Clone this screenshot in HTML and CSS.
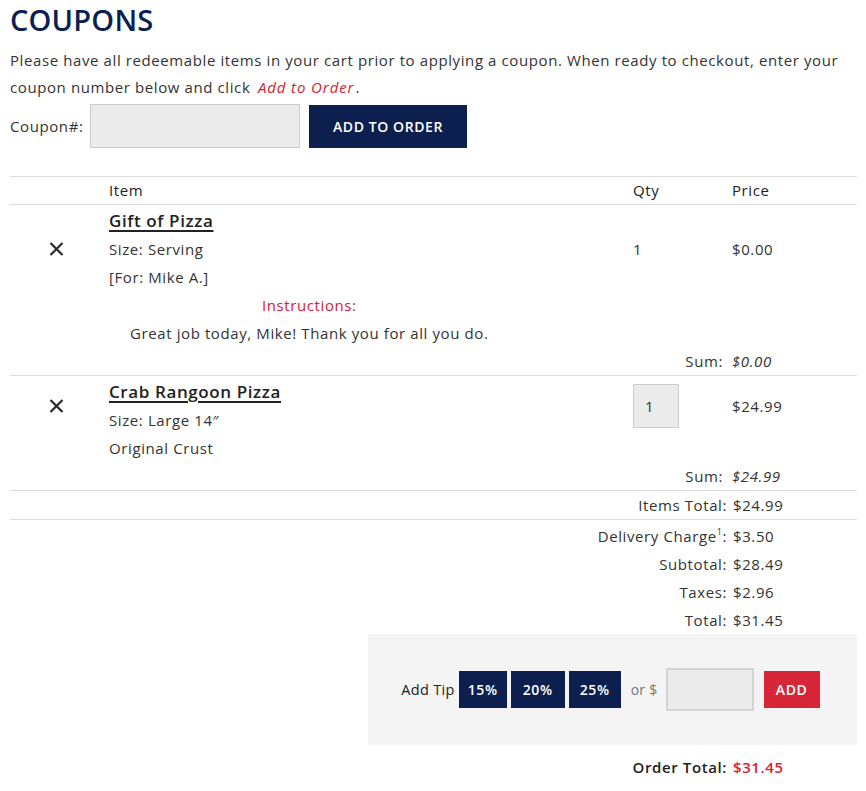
FILE: index.html
```html
<!DOCTYPE html>
<html lang="en">
<head>
<meta charset="utf-8">
<title>Coupons</title>
<link rel="stylesheet" href="styles.css">
</head>
<body>
<div class="page">
  <h1 class="title">COUPONS</h1>
  <p class="intro">Please have all redeemable items in your cart prior to applying a coupon. When ready to checkout, enter your coupon number below and click <em class="red link-em">Add to Order<span class="stop">.</span></em></p>
  <div class="coupon-row">
    <label class="coupon-label" for="coupon">Coupon#:</label>
    <input class="coupon-input" id="coupon" type="text">
    <button class="btn-navy add-order">ADD TO ORDER</button>
  </div>

  <div class="cart">
    <div class="cart-head">
      <div></div>
      <div>Item</div>
      <div>Qty</div>
      <div>Price</div>
    </div>

    <div class="cart-item">
      <div class="remove r1">
        <svg width="15" height="14" viewBox="0 0 15 14"><path d="M1.5 1 L13.5 13 M13.5 1 L1.5 13" stroke="#2b2b2b" stroke-width="2.2" fill="none"/></svg>
      </div>
      <div class="info r1">
        <a class="item-name" href="#">Gift of Pizza</a>
        <div class="line">Size: Serving</div>
        <div class="line">[For: Mike A.]</div>
      </div>
      <div class="qty r1">1</div>
      <div class="price r1">$0.00</div>
      <div class="extra">
        <div class="instr-label">Instructions:</div>
        <div class="instr-text">Great job today, Mike! Thank you for all you do.</div>
      </div>
      <div class="sum-label">Sum:</div>
      <div class="sum-value">$0.00</div>
    </div>

    <div class="cart-item">
      <div class="remove r1">
        <svg width="15" height="14" viewBox="0 0 15 14"><path d="M1.5 1 L13.5 13 M13.5 1 L1.5 13" stroke="#2b2b2b" stroke-width="2.2" fill="none"/></svg>
      </div>
      <div class="info r1">
        <a class="item-name" href="#">Crab Rangoon Pizza</a>
        <div class="line">Size: Large 14″</div>
      </div>
      <div class="qty r1"><input class="qty-input" type="text" value="1"></div>
      <div class="price r1">$24.99</div>
      <div class="extra">
        <div class="line">Original Crust</div>
      </div>
      <div class="sum-label">Sum:</div>
      <div class="sum-value">$24.99</div>
    </div>

    <div class="totals items-total">
      <div class="t-label">Items Total:</div>
      <div class="t-value">$24.99</div>
    </div>
    <div class="totals charges">
      <div class="t-label">Delivery Charge<sup>1</sup>:</div>
      <div class="t-value">$3.50</div>
      <div class="t-label">Subtotal:</div>
      <div class="t-value">$28.49</div>
      <div class="t-label">Taxes:</div>
      <div class="t-value">$2.96</div>
      <div class="t-label">Total:</div>
      <div class="t-value">$31.45</div>
    </div>
  </div>

  <div class="tip-wrap">
    <div class="tip-box">
      <span class="tip-label">Add Tip</span>
      <button class="btn-navy tip-btn">15%</button>
      <button class="btn-navy tip-btn">20%</button>
      <button class="btn-navy tip-btn">25%</button>
      <span class="tip-or">or $</span>
      <input class="tip-input" type="text">
      <button class="btn-red">ADD</button>
    </div>
  </div>

  <div class="totals order-total">
    <div class="t-label strong">Order Total:</div>
    <div class="t-value strong red">$31.45</div>
  </div>
</div>
</body>
</html>
```

FILE: styles.css
```css
* { box-sizing: border-box; }
html, body { margin: 0; padding: 0; background: #fff; }
body {
  font-family: "Open Sans", "Liberation Sans", sans-serif;
  font-size: 15px;
  color: #333;
  letter-spacing: 0.6px;
}
.page { padding: 0 9px 0 10px; }
.title {
  margin: 0;
  height: 40px;
  line-height: 40px;
  font-size: 29px;
  font-weight: 600;
  color: #0c1f4f;
  letter-spacing: 0.2px;
}
.intro {
  margin: 7px 0 0;
  line-height: 27px;
  font-size: 15px;
}
.red { color: #d9202f; }
.link-em { letter-spacing: 0.9px; margin-left: 3px; }
.stop { font-style: normal; color: #333; letter-spacing: 0; margin-left: 1px; }
.coupon-row {
  margin-top: 3px;
  display: flex;
  align-items: center;
  height: 44px;
}
.coupon-label { width: 80px; }
.coupon-input {
  width: 210px;
  height: 44px;
  background: #ebebeb;
  border: 1px solid #ccc;
  margin: 0;
}
.btn-navy {
  background: #0c1f4f;
  color: #fff;
  border: 0;
  font-family: inherit;
  font-weight: 600;
  cursor: pointer;
  letter-spacing: 0.6px;
}
.add-order {
  margin-left: 9px;
  width: 158px;
  height: 43px;
  font-size: 14px;
  letter-spacing: 0.6px;
}
.cart { margin-top: 28px; }
.cart-head, .cart-item {
  display: grid;
  grid-template-columns: 99px 1fr 99px 125px;
}
.cart-head {
  border-top: 1px solid #ddd;
  border-bottom: 1px solid #ddd;
  height: 29px;
  line-height: 27px;
  font-weight: 500;
  color: #222;
}
.cart-item {
  border-bottom: 1px solid #ddd;
  padding-top: 2px;
  line-height: 28px;
}
.r1 { grid-row: 1; }
.remove { grid-column: 1; align-self: center; display: flex; justify-content: center; padding-right: 6px; }
.remove svg { display: block; }
.info { grid-column: 2; }
.qty { grid-column: 3; align-self: center; }
.price { grid-column: 4; align-self: center; }
.item-name {
  color: #222;
  font-weight: 600;
  font-size: 17px;
  text-decoration: underline;
  text-underline-offset: 3px;
  text-decoration-thickness: 1.5px;
}
.extra { grid-column: 2; grid-row: 2; }
.instr-label { color: #d9202f; padding-left: 153px; font-weight: 500; }
.instr-text { padding-left: 21px; }
.sum-label { grid-column: 3; grid-row: 3; text-align: right; padding-right: 9px; }
.sum-value { grid-column: 4; grid-row: 3; font-style: italic; }
.qty-input {
  width: 46px;
  height: 44px;
  background: #ebebeb;
  border: 1px solid #ccc;
  font-family: inherit;
  font-size: 15px;
  color: #333;
  padding: 0 0 0 11px;
  display: block;
  margin-top: -1px;
}
.totals {
  display: grid;
  grid-template-columns: 1fr 125px;
  line-height: 28px;
}
.t-label { text-align: right; padding-right: 5px; }
.t-value { padding-left: 1px; }
.items-total { border-bottom: 1px solid #ddd; }
.charges { padding-top: 2px; }
sup { font-size: 9px; line-height: 0; vertical-align: 7px; color: #333; }
.tip-wrap { display: flex; justify-content: flex-end; }
.tip-box {
  width: 489px;
  height: 111px;
  background: #f4f4f4;
  display: flex;
  align-items: center;
  justify-content: center;
  padding-right: 4px;
}
.tip-label { font-weight: 500; color: #222; margin-right: 4px; font-size: 14.5px; letter-spacing: 0.3px; }
.tip-btn {
  height: 37px;
  font-size: 14px;
  padding: 0;
  margin-right: 4px;
}
.tip-btn:nth-of-type(1) { width: 48px; }
.tip-btn:nth-of-type(2) { width: 54px; }
.tip-btn:nth-of-type(3) { width: 52px; }
.tip-or { color: #777; font-size: 14px; margin-left: 6px; margin-right: 8px; letter-spacing: 0.3px; }
.tip-input {
  width: 88px;
  height: 43px;
  background: #ebebeb;
  border: 2px solid #d4d4d4;
  margin: 0 10px 0 0;
}
.btn-red {
  width: 56px;
  height: 37px;
  background: #d62637;
  color: #fff;
  border: 0;
  font-family: inherit;
  font-weight: 600;
  font-size: 14px;
  padding: 0;
  letter-spacing: 0.6px;
}
.order-total { margin-top: 8px; }
.strong { font-weight: 600; color: #222; }
.t-value.red { color: #d9202f; }
```
